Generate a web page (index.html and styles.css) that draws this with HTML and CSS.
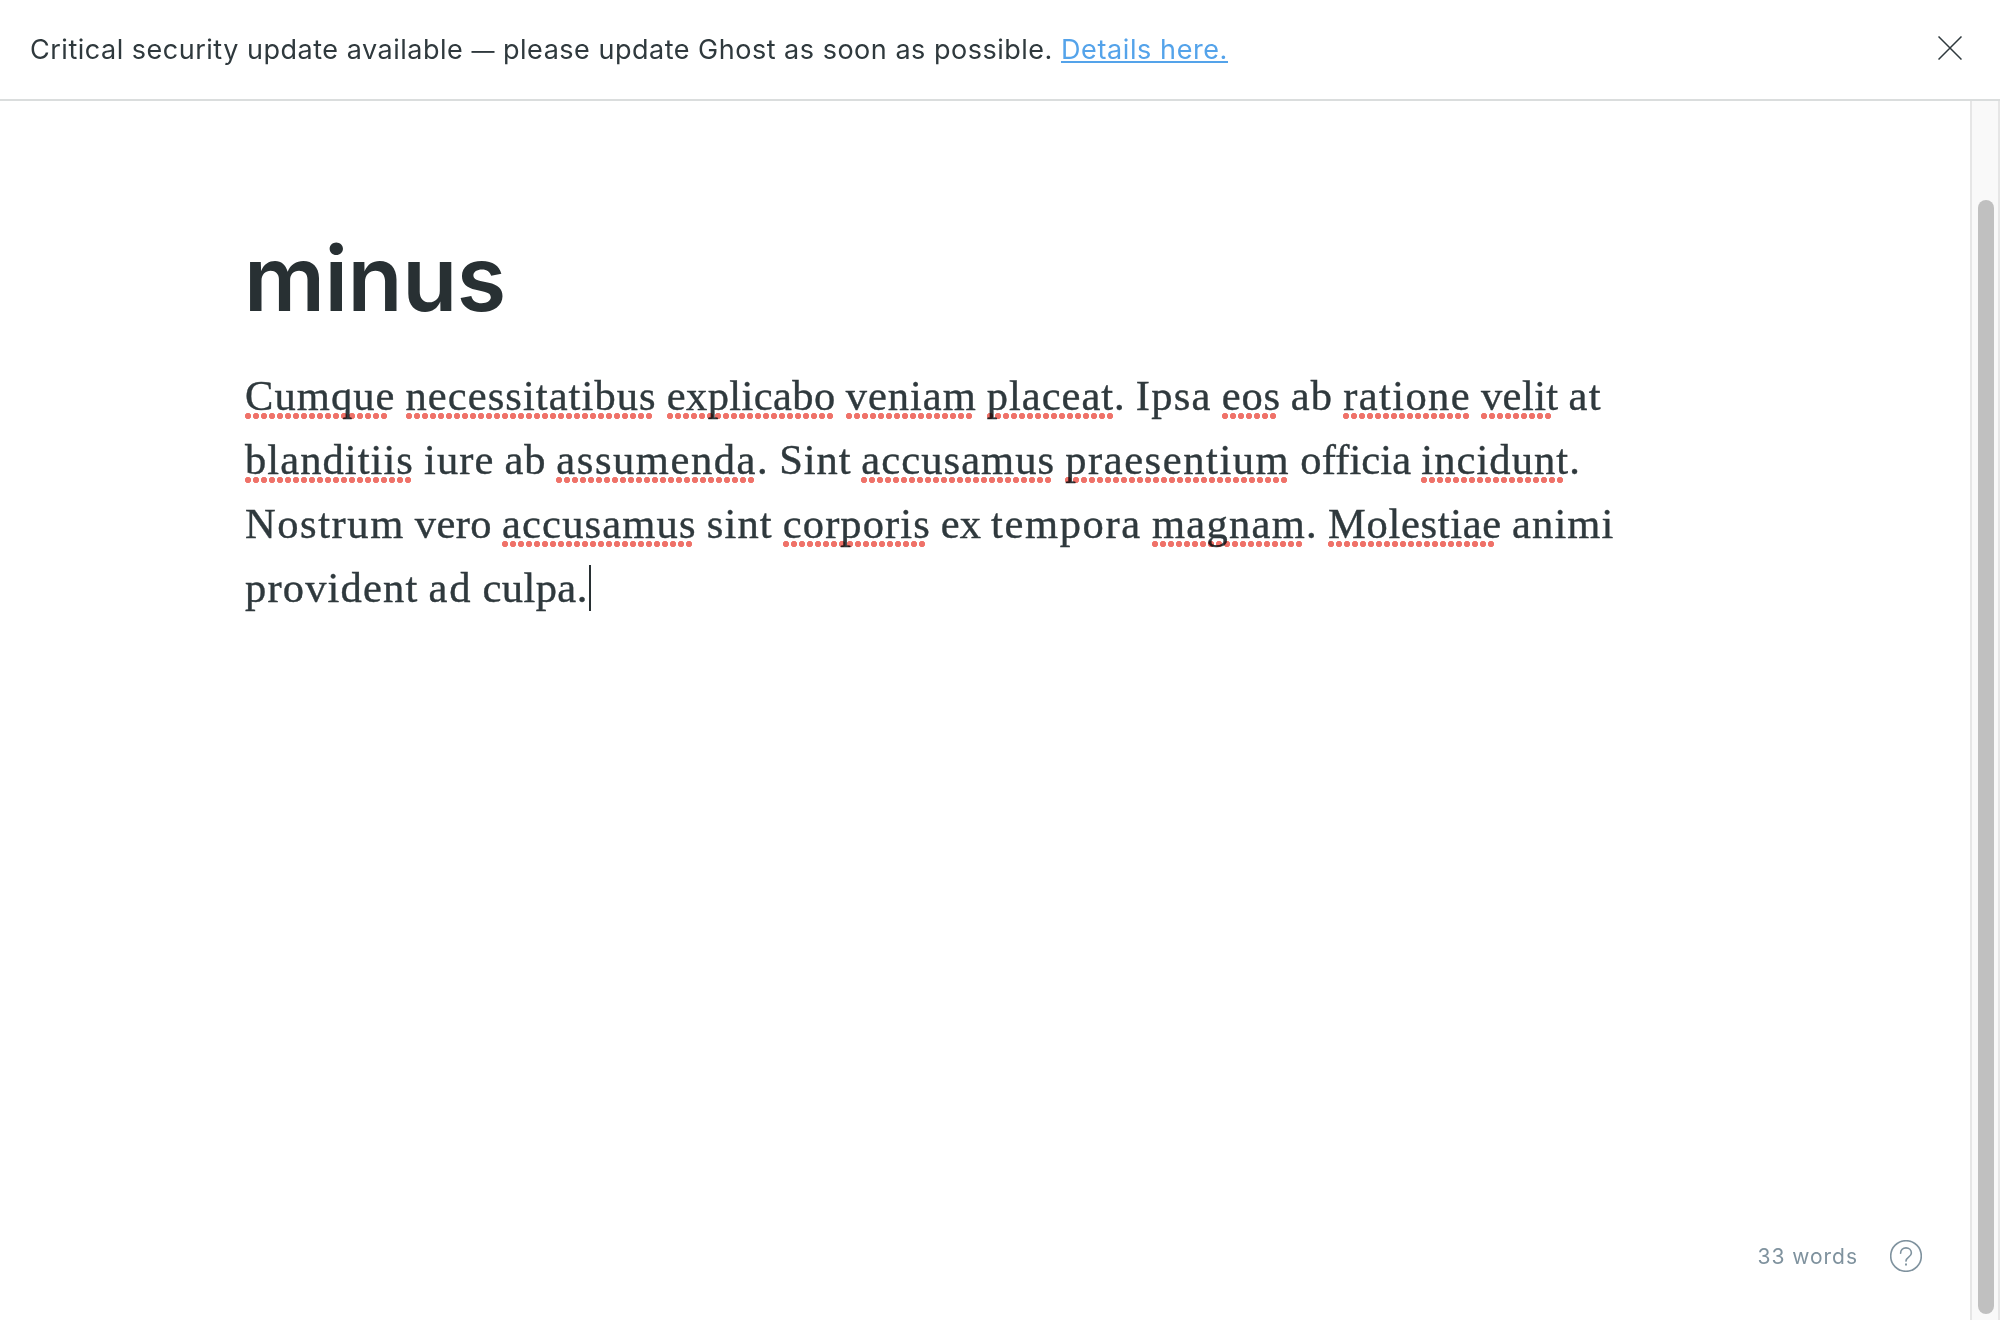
FILE: index.html
```html
<!DOCTYPE html>
<html lang="en">
<head>
<meta charset="utf-8">
<title>Editor - Ghost</title>
<link rel="stylesheet" href="styles.css">
</head>
<body>
<div class="app">
  <header class="alert">
    <p class="alert-text">Critical security update available <span class="dash">—</span> please update Ghost as soon as possible. <a class="alert-link" href="#">Details here.</a></p>
    <button class="close" aria-label="Close">
      <svg viewBox="0 0 24 24" width="24" height="24"><path d="M.5.5l23 23M23.5.5l-23 23"/></svg>
    </button>
  </header>
  <div class="workspace">
    <main class="editor">
      <h1 class="title">minus</h1>
      <div class="body">
        <p class="line"><span class="misspelt k11">Cumque</span> <span class="misspelt k11">necessitatibus</span> <span class="misspelt k4">explicabo</span> <span class="misspelt k10">veniam</span> <span class="k10"><span class="misspelt">placeat</span>.</span> <span class="k13">Ipsa</span> <span class="misspelt k8">eos</span> <span class="k12">ab</span> <span class="misspelt k14">ratione</span> <span class="misspelt k4">velit</span> <span class="k14">at</span></p>
        <p class="line"><span class="misspelt k11">blanditiis</span> <span class="k11">iure</span> <span class="k9">ab</span> <span class="k16"><span class="misspelt">assumenda</span>.</span> <span class="k9">Sint</span> <span class="misspelt k11">accusamus</span> <span class="misspelt k16">praesentium</span> <span class="k1">officia</span> <span class="k11"><span class="misspelt">incidunt</span>.</span></p>
        <p class="line"><span class="k16">Nostrum</span> <span class="k4">vero</span> <span class="misspelt k12">accusamus</span> <span class="k12">sint</span> <span class="misspelt k11">corporis</span> <span class="k0">ex</span> <span class="k17">tempora</span> <span class="k13"><span class="misspelt">magnam</span>.</span> <span class="misspelt k7">Molestiae</span> <span class="k12">animi</span></p>
        <p class="line"><span class="k12">provident</span> <span class="k19">ad</span> <span class="k4">culpa.</span><i class="caret"></i></p>
      </div>
      <footer class="status">
        <span class="count">33 words</span>
        <svg class="help" viewBox="0 0 32 32" width="32" height="32"><circle cx="16" cy="16" r="15.3"/><path d="M10.6 13.2c0-3.2 2.3-5.3 5.4-5.3s5.4 2.1 5.4 5.1c0 4.3-5.4 4-5.4 8.1"/><path class="dot" d="M16 23.5v1.9"/></svg>
      </footer>
    </main>
    <div class="scrollbar"><div class="thumb"></div></div>
  </div>
</div>
</body>
</html>
```
FILE: styles.css
```css
* { box-sizing: border-box; margin: 0; padding: 0; }
body { background: #fff; color: #2f393d; font-family: Inter, sans-serif; }
.app { display: flex; flex-direction: column; width: 2000px; height: 1320px; overflow: hidden; }

.alert { display: flex; flex: none; align-items: center; justify-content: space-between; height: 101px; padding: 0 38px 0 30px; border-bottom: 2px solid #dadddd; }
.alert-text { padding-top: 2px; font-size: 27px; line-height: 40px; letter-spacing: .51px; white-space: nowrap; }
.dash { font-size: 23px; }
.alert-link { color: #54a3ea; letter-spacing: .6px; text-decoration: underline; text-decoration-thickness: 2px; text-underline-offset: 2px; text-decoration-skip-ink: none; }
.close { display: flex; margin-top: -3px; border: 0; background: none; }
.close svg { fill: none; stroke: #2f393d; stroke-width: 1.5; }

.workspace { display: flex; flex: 1; min-height: 0; }
.editor { display: flex; flex: 1; flex-direction: column; padding: 127px 48px 48px 244px; }
.title { color: #283033; font-size: 90px; font-weight: 600; line-height: 101px; letter-spacing: -.5px; }
.body { margin-top: 35px; font-family: "Liberation Serif", serif; font-size: 42.5px; -webkit-text-stroke: .4px; }
.line { display: flex; gap: 10px; height: 64px; padding-left: 1px; line-height: 64px; white-space: nowrap; }

/* Spelling marks: a row of whole dots under the word */
.misspelt { position: relative; }
.misspelt::after { content: ""; position: absolute; top: 49px; left: 0; width: round(down, 100% + 1px, 8px); height: 6px; background: radial-gradient(circle at 3px 3px, #ef7269 2.8px, transparent 3.5px) 0 0 / 8px 6px repeat-x; mix-blend-mode: multiply; }
.line > span { display: block; }
.line > span > .misspelt { display: inline-block; }

/* Word tracking, in tenths of a pixel */
.k0 { letter-spacing: 0; }
.k1 { letter-spacing: .12px; }
.k4 { letter-spacing: .42px; }
.k7 { letter-spacing: .7px; }
.k8 { letter-spacing: .8px; }
.k9 { letter-spacing: .9px; }
.k10 { letter-spacing: 1px; }
.k11 { letter-spacing: 1.08px; }
.k12 { letter-spacing: 1.18px; }
.k13 { letter-spacing: 1.3px; }
.k14 { letter-spacing: 1.38px; }
.k16 { letter-spacing: 1.58px; }
.k17 { letter-spacing: 1.68px; }
.k19 { letter-spacing: 1.94px; }

.caret { width: 2px; height: 46px; margin: 9px 0 0 -9px; background: #283033; }

.status { display: flex; align-items: center; justify-content: flex-end; gap: 32px; margin-top: auto; color: #7f929e; }
.count { height: 32px; font-size: 21px; line-height: 34px; letter-spacing: .97px; }
.help { fill: none; stroke: #7f929e; stroke-width: 1.6; stroke-linecap: round; }
.dot { stroke-width: 1.9; stroke-linecap: butt; }

.scrollbar { display: flex; width: 30px; padding: 99px 4px 6px 6px; border: solid #e6e6e6; border-width: 0 2px; background: #f9f9f9; }
.thumb { width: 16px; border-radius: 8px; background: #c0c0c0; }
```
